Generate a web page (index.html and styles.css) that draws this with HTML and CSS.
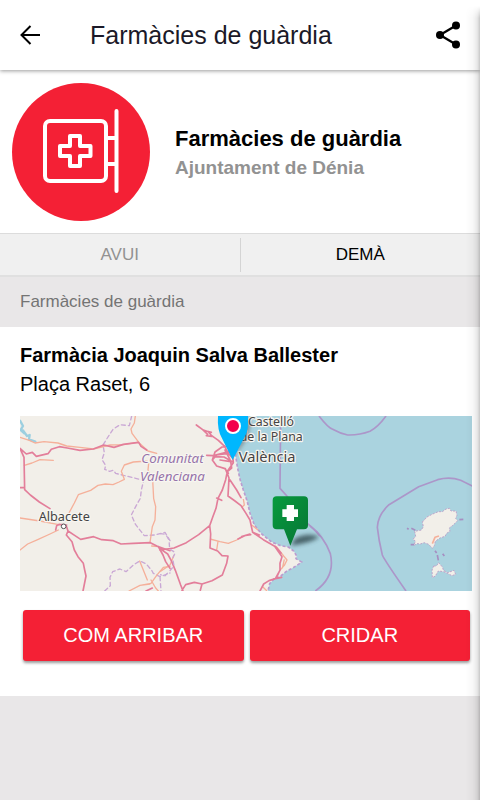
FILE: index.html
```html
<!DOCTYPE html>
<html lang="ca">
<head>
<meta charset="utf-8">
<meta name="viewport" content="width=device-width, initial-scale=1">
<title>Farmàcies de guàrdia</title>
<link rel="stylesheet" href="styles.css">
</head>
<body>
<header class="bar">
  <button class="icon-button" type="button" aria-label="Enrere">
    <svg width="22" height="22" viewBox="0 0 22 22" fill="none" stroke="#000" stroke-width="2"><path d="M22 11H3.500M12.500 2L3.500 11L12.500 20"/></svg>
  </button>
  <h1 class="bar-title">Farmàcies de guàrdia</h1>
  <button class="icon-button" type="button" aria-label="Comparteix">
    <svg width="26" height="28" viewBox="0 0 26 28"><path d="M20 4.500L4 14L20 23.500" fill="none" stroke="#000" stroke-width="2.300"/><circle cx="20" cy="4.500" r="4"/><circle cx="4" cy="14" r="4"/><circle cx="20" cy="23.500" r="4"/></svg>
  </button>
</header>
<main>
  <section class="hero">
    <svg class="hero-logo" viewBox="0 0 138 138" aria-hidden="true">
      <circle cx="69" cy="69" r="69" fill="#f42035"/>
      <g fill="none" stroke="#fff" stroke-width="4" stroke-linecap="round" stroke-linejoin="round">
        <rect x="33" y="38" width="61" height="60" rx="5"/>
        <path d="M104.500 28V108M94 55H104M94 81H104"/>
        <path d="M58 53H68V63H78.500V73H68V83H58V73H48V63H58Z"/>
      </g>
    </svg>
    <div>
      <h2 class="hero-title">Farmàcies de guàrdia</h2>
      <p class="hero-owner">Ajuntament de Dénia</p>
    </div>
  </section>
  <nav class="tabs">
    <button class="tab" type="button">AVUI</button>
    <button class="tab tab-active" type="button">DEMÀ</button>
  </nav>
  <h3 class="section-title">Farmàcies de guàrdia</h3>
  <article class="card">
    <h4 class="card-title">Farmàcia Joaquin Salva Ballester</h4>
    <p class="card-address">Plaça Raset, 6</p>
    <svg class="map" viewBox="0 0 1356 525" role="img" aria-label="Mapa">
      <defs>
        <filter id="soft" x="-50%" y="-50%" width="200%" height="200%"><feGaussianBlur stdDeviation="7"/></filter>
        <linearGradient id="green" x1="0" y1="0" x2="1" y2="1"><stop offset="0" stop-color="#079b3e"/><stop offset="1" stop-color="#077535"/></linearGradient>
      </defs>
      <rect width="1356" height="525" fill="#aad3df"/>
      <g transform="translate(420 -18)">
        <path d="M-420 18H263L257 55L239 90L226 130L232 170L240 208L250 240L262 275L270 310L283 345L305 372L335 396L362 407L385 411L401 423L410 438L408 446L425 456L411 466L398 474L379 484L361 499L342 507L329 521L324 543H-420Z" fill="#f2efe9"/>
        <path d="M263 18L257 55L239 90L226 130L232 170L240 208L250 240L262 275L270 310L283 345L305 372L335 396L362 407L385 411L401 423L410 438L408 446L425 456L411 466L398 474L379 484L361 499L342 507L329 521L324 543" fill="none" stroke="#bb9cd0" stroke-width="5" stroke-dasharray="9 6"/>
        <path d="M362 18L360 235L380 257L408 297L442 340L460 356L480 378" fill="none" stroke="#ac96c9" stroke-width="5"/>
        <g fill="none" stroke="#f5b09a" stroke-width="4" stroke-linejoin="round">
          <path d="M150 387L180 395L205 400L230 390L248 379M174 394L170 420M250 267L253 285L245 292M275 345L294 360M349 410L371 438L381 450L373 466L362 478M373 448L367 475M0 485L30 465L42 435M308 530L321 543"/>
        </g>
        <g fill="none" stroke="#e37e9a" stroke-width="5" stroke-linejoin="round" stroke-linecap="round">
          <path d="M109 45L128 59L145 65L155 77L175 91L194 109L205 130L219 145L220 158L202 184L197 209L187 240L174 265L168 295L158 322L149 347L116 374L79 398L42 414L0 420M145 65L154 67M128 59L143 73M139 77L155 79M140 136L160 137L190 129L205 125M205 130L170 135L157 150L170 168L195 176L205 190M157 150L165 126L186 111L202 109M165 140L192 141L217 155M180 150L212 155L215 174L204 183M195 120L210 149M196 176L207 204L204 258L225 273L243 287L258 310L270 330L278 367L310 389L344 409L366 440L360 460L360 480L349 504M210 210L230 240L243 263M170 264L185 271M149 347L152 372L150 414L173 423L186 437L204 438L200 460L187 495L156 512L126 522L103 517L77 524L66 541M126 522L121 541M0 416L23 432L35 454L46 481L62 525L69 543M245 380L270 372M234 387L257 376L272 374M278 367L298 375M346 409L363 429M361 479L346 506L327 512L311 522L300 543M346 506L365 502"/>
        </g>
        <path d="M0 371L17 373L27 390L29 417L46 428L38 445L42 468L28 484L15 497L0 494" fill="none" stroke="#caa8d5" stroke-width="4" stroke-dasharray="14 8"/>
      </g>
      <g transform="translate(-30 -18)" fill="none" stroke-linejoin="round" stroke-linecap="round">
        <path d="M30 32L39 48L32 60L43 70L39 61L51 78L59 75L57 88L76 95" stroke="#9ccfe0" stroke-width="7"/>
        <path d="M365 18L358 47L330 44L309 58L292 84L279 105L283 128L276 149L287 166L284 178L299 184L310 181L317 190L340 196L370 203L401 211L394 240L391 265L379 286L364 315L377 344L403 377L433 375L465 367L480 392M284 543L301 527L300 502L308 485L330 477L348 485L370 465L389 453L408 461L425 481L430 490L450 500L480 489M450 500L453 543" stroke="#caa8d5" stroke-width="4" stroke-dasharray="12 9"/>
        <g stroke="#f5b09a" stroke-width="4">
          <path d="M30 82L58 91L75 99L102 95L144 99L170 108L210 112L250 117L300 105L340 104L382 97M376 18L373 39L363 57L366 70L387 98L414 123L440 130M43 166L66 159L90 149L130 151M412 153L370 156L343 165L334 184L343 208L327 216L309 224L286 222L264 226L242 241L205 254L193 279L177 309M416 160L414 180L428 210L431 266L437 290L435 330L427 350L420 397M30 324L90 333L146 344M145 360L120 372L83 389L53 402L30 420M389 453L412 510M357 543L390 526L423 520L440 496L460 472L480 469M423 510L437 534L445 543M425 408L445 410M390 526L420 522"/>
        </g>
        <g stroke="#e37e9a" stroke-width="5">
          <path d="M30 115L49 132L67 127L79 139L114 131L124 118L148 110L172 114L210 121L250 117L281 105L312 112L340 103L386 97L393 109L410 120M30 115L42 142L44 239L61 255L88 276L120 296M30 233H43M148 343L169 348L174 363L195 377L212 388L251 380L275 389L310 392L333 402L370 400L421 398L442 409L480 422M174 363L169 375L186 395L193 420L204 440L220 460L224 480L228 498L219 543M148 343L140 347L137 360M148 343L170 345M445 410L459 435L467 455L480 475M408 543L427 534"/>
        </g>
      </g>
      <g transform="translate(870 -18)" fill="none" stroke-linejoin="round">
        <path d="M27 18Q54 53 68 58Q91 71 113 75Q148 76 180 64Q205 50 228 18M487 228L452 211Q420 199 383 209L326 230L237 284Q203 316 202 352Q206 390 217 435Q223 450 288 543M0 348Q40 376 61 431Q77 500 16 543" stroke="#ac96c9" stroke-width="5"/>
        <g fill="#f2efe9" stroke="#bda4ca" stroke-width="3" stroke-dasharray="6 4">
          <path d="M337 336L351 321L366 313L385 305L397 305L408 297L419 295L423 303L438 303L441 316L437 325L443 332L435 340L427 347L418 354L420 364L410 370L405 379L390 384L376 394L373 407L367 415L356 403L342 398L331 402L321 401L312 406L316 393L309 388L317 379L314 364L334 360L340 350Z"/>
          <path d="M371 468L379 468L386 458L398 472L400 481L413 488L432 481L437 493L426 497L412 490L401 485L385 483L376 498L367 503L366 480Z"/>
        </g>
        <path d="M367 401L375 382L387 378" stroke="#f5b09a" stroke-width="5"/>
        <path d="M291 355L296 358M304 355L316 361M448 329L460 328M302 404L312 404M375 422L380 429M382 435L385 451M398 431L403 438" stroke="#a68fc1" stroke-width="5"/>
      </g>
      <g class="map-labels">
        <text x="56" y="315" font-size="38">Albacete</text>
        <text class="map-region" x="364" y="140" font-size="40">Comunitat</text>
        <text class="map-region" x="360" y="195" font-size="40">Valenciana</text>
        <text x="684" y="29" font-size="37">Castelló</text>
        <text x="659" y="74" font-size="37">de la Plana</text>
        <text x="656" y="138" font-size="44">València</text>
      </g>
      <circle cx="131" cy="331" r="7" fill="#fff" stroke="#555" stroke-width="3"/>
      <path d="M640 126L662 60L684 5L692 25L680 68Z" fill="#555" opacity=".55" filter="url(#soft)"/>
      <path d="M594 0H684V25Q684 48 671 68L638 132L607 69Q591 44 594 0Z" fill="#00b7fe"/>
      <circle cx="639" cy="30" r="21" fill="#f3004c" stroke="#fff" stroke-width="6"/>
      <path d="M812 389L825 367Q860 348 898 362Q875 381 812 389Z" fill="#304850" opacity=".8" filter="url(#soft)"/>
      <path d="M770 241H852Q864 241 864 253V328Q864 340 852 340H831L811 389L792 340H770Q758 340 758 328V253Q758 241 770 241Z" fill="url(#green)"/>
      <path d="M800 267H822V280H834V303H822V315H800V303H787V280H800Z" fill="#fff"/>
    </svg>
    <div class="actions">
      <button class="action" type="button">COM ARRIBAR</button>
      <button class="action" type="button">CRIDAR</button>
    </div>
  </article>
</main>
</body>
</html>
```
FILE: styles.css
```css
* {
  box-sizing: border-box;
}

body {
  margin: 0;
  min-height: 100vh;
  background: #e9e7e8;
  color: #000;
  font-family: "Liberation Sans", Arial, sans-serif;
}

/* Shade of the panel lying to the right of the page */
body::after {
  content: "";
  position: fixed;
  top: 6px;
  right: 0;
  bottom: 0;
  width: 14px;
  background: linear-gradient(to right, transparent, rgba(0, 0, 0, 0.03) 50%, rgba(0, 0, 0, 0.09) 80%, rgba(0, 0, 0, 0.22));
  -webkit-mask-image: linear-gradient(transparent, #000 12px);
  mask-image: linear-gradient(transparent, #000 12px);
  pointer-events: none;
}

h1, h2, h3, h4, p {
  margin: 0;
}

button {
  border: 0;
  background: none;
  font-family: inherit;
}

.bar {
  position: relative;
  display: flex;
  align-items: center;
  height: 70px;
  padding: 0 18px;
  background: #fff;
  box-shadow: 0 1px 4px rgba(0, 0, 0, 0.4);
}

.icon-button {
  display: flex;
  padding: 0;
}

.bar-title {
  flex: 1;
  padding-left: 50px;
  color: #1b1928;
  font-size: 25px;
  font-weight: 400;
  line-height: 30px;
}

.hero {
  display: flex;
  align-items: center;
  gap: 25px;
  padding: 13px 12px 12px;
  background: #fff;
}

.hero-logo {
  width: 138px;
  height: 138px;
}

.hero-title {
  padding-top: 3px;
  font-size: 22px;
  line-height: 28px;
}

.hero-owner {
  color: #929292;
  font-size: 19px;
  font-weight: 700;
  line-height: 29px;
}

.tabs {
  display: flex;
  align-items: center;
  height: 44px;
  border-top: 1px solid #dcdcdc;
  border-bottom: 2px solid #e0e0e0;
  background: #f0f0f0;
}

.tab {
  flex: 1;
  height: 34px;
  color: #929292;
  font-size: 17px;
}

.tab-active {
  border-left: 1px solid #d4d4d4;
  color: #000;
}

.section-title {
  padding: 0 20px;
  color: #747474;
  font-size: 17px;
  font-weight: 400;
  line-height: 50px;
}

.card {
  padding: 14px 8px 35px 20px;
  background: #fff;
}

.card-title {
  font-size: 20px;
  line-height: 29px;
}

.card-address {
  font-size: 20px;
  line-height: 29px;
}

.map {
  display: block;
  width: 100%;
  margin-top: 17px;
}

.map-labels {
  fill: #444;
  stroke: #f8f6f1;
  stroke-width: 7px;
  stroke-linejoin: round;
  paint-order: stroke;
  font-family: "Noto Sans", sans-serif;
}

.map-region {
  fill: #9673aa;
  font-style: italic;
}

.actions {
  display: flex;
  gap: 6px;
  margin-top: 19px;
  padding: 0 2px 0 3px;
}

.action {
  flex: 1;
  height: 51px;
  border-radius: 3px;
  background: #f42035;
  box-shadow: 0 2px 3px rgba(0, 0, 0, 0.4);
  color: #fff;
  font-size: 20px;
}
```
